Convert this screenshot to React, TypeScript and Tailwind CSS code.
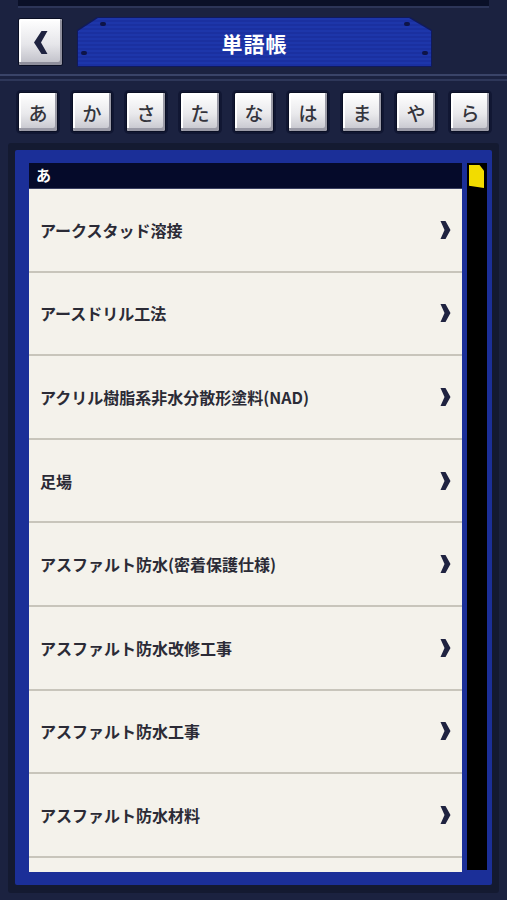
import React from "react";

const kana = ["あ", "か", "さ", "た", "な", "は", "ま", "や", "ら"];

const words = [
  "アークスタッド溶接",
  "アースドリル工法",
  "アクリル樹脂系非水分散形塗料(NAD)",
  "足場",
  "アスファルト防水(密着保護仕様)",
  "アスファルト防水改修工事",
  "アスファルト防水工事",
  "アスファルト防水材料",
];

const font = {
  fontFamily: '"Noto Sans CJK JP", "Noto Sans", "Liberation Sans", sans-serif',
};

function KeyButton({ label }: { label: string }) {
  return (
    <div className="w-[40px] h-[40px] rounded-[3px] p-[1px] bg-[#0a0f24] shadow-[0_0_0_2px_#111733]">
      <div className="w-full h-full rounded-[2px] flex items-center justify-center bg-[linear-gradient(180deg,#ffffff_0%,#e9e9ec_55%,#c4c4cc_100%)] shadow-[inset_-2px_-3px_0_#9a9aa6,inset_2px_2px_0_#ffffff]">
        <span className="text-[19px] font-medium text-[#34343c] leading-none">{label}</span>
      </div>
    </div>
  );
}

function Row({ text }: { text?: string }) {
  return (
    <div className="h-[83.6px] shrink-0 flex items-center justify-between pl-[11px] pr-[11px] border-b-2 border-[#c8c5bb] bg-[#f4f2eb]">
      <span className="text-[16px] font-bold text-[#2b2b36]">{text}</span>
      {text && (
        <svg width="11" height="20" viewBox="0 0 11 20">
          <path d="M0.5 1 L5.5 1 L10.5 10 L5.5 19 L0.5 19 L4.5 10 Z" fill="#1f2340" />
        </svg>
      )}
    </div>
  );
}

export default function App() {
  return (
    <div
      className="w-[507px] h-[900px] overflow-hidden bg-[#1b2240] flex flex-col"
      style={font}
    >
      {/* top strip */}
      <div className="h-[8px] bg-[#0a1028] border-b-2 border-[#2c3558] mx-[18px]" />

      {/* header */}
      <div className="flex items-start pl-[18px] pt-[9px]">
        <div className="w-[45px] h-[48px] rounded-[3px] p-[1px] bg-[#0a0f24] mt-[1px]">
          <div className="w-full h-full rounded-[2px] flex items-center justify-center bg-[linear-gradient(180deg,#ffffff_0%,#e6e6ea_55%,#bdbdc6_100%)] shadow-[inset_-2px_-3px_0_#8f8f9c,inset_2px_2px_0_#ffffff]">
            <svg width="15" height="25" viewBox="0 0 15 25">
              <path d="M14.5 1 L8.5 1 L1 12.5 L8.5 24 L14.5 24 L8 12.5 Z" fill="#1f2340" />
            </svg>
          </div>
        </div>
        <div className="relative ml-[14px] w-[355px] h-[50px] [clip-path:polygon(0_13px,20px_0,calc(100%-22px)_0,100%_13px,100%_100%,0_100%)] bg-[#101a5c] p-[1px]">
          <div className="w-full h-full [clip-path:polygon(0_13px,20px_0,calc(100%-22px)_0,100%_13px,100%_100%,0_100%)] bg-[repeating-linear-gradient(180deg,#1d36aa_0px,#1d36aa_2px,#1a30a0_2px,#1a30a0_4px)] flex items-center justify-center">
            <span className="text-[21px] font-bold text-white tracking-[1px] mt-[3px]">単語帳</span>
          </div>
          <span className="absolute left-[23px] top-[5px] w-[6px] h-[4px] rounded-full bg-[#0d1448]" />
          <span className="absolute left-[4px] top-[34px] w-[6px] h-[4px] rounded-full bg-[#0d1448]" />
          <span className="absolute right-[22px] top-[5px] w-[6px] h-[4px] rounded-full bg-[#0d1448]" />
          <span className="absolute right-[4px] top-[34px] w-[6px] h-[4px] rounded-full bg-[#0d1448]" />
        </div>
      </div>

      {/* separator */}
      <div className="mt-[7px] h-[2px] bg-[#3a4468]" />
      <div className="mt-[3px] h-[2px] bg-[#2e3759]" />

      {/* kana keys */}
      <div className="flex gap-[14px] pl-[18px] mt-[11px]">
        {kana.map((k) => (
          <KeyButton key={k} label={k} />
        ))}
      </div>

      {/* list panel */}
      <div className="mt-[11px] mx-[8px] p-[7px] pb-[8px] bg-[#141a31] rounded-[3px]">
        <div className="bg-[#1b2f98] pl-[14px] pr-[2px] pt-[13px] pb-[13px] flex gap-[5px] rounded-[2px]">
          <div className="w-[433px] h-[709px] overflow-hidden flex flex-col">
            <div className="h-[26px] shrink-0 bg-[#050a2a] flex items-center pl-[7px] border-b border-[#3a3f60]">
              <span className="text-[15px] font-bold text-white">あ</span>
            </div>
            {words.map((w) => (
              <Row key={w} text={w} />
            ))}
            <Row />
          </div>
          <div className="w-[20px] h-[707px] bg-black pt-[2px] px-[2px]">
            <div className="w-[15px] h-[23px] bg-[#f2dc00] [clip-path:polygon(0_0,70%_0,100%_25%,100%_100%,0_90%)]" />
          </div>
        </div>
      </div>
    </div>
  );
}
